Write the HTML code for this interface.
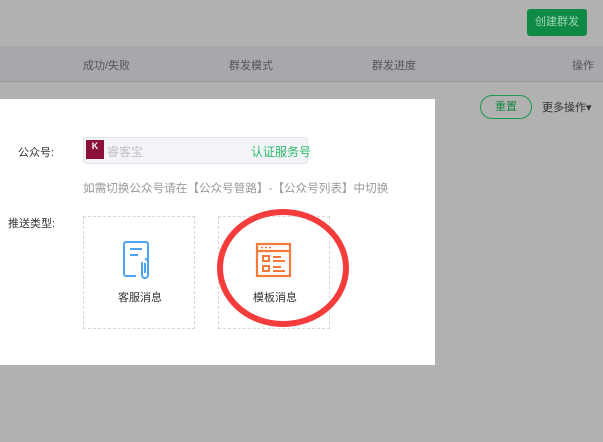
<!DOCTYPE html>
<html><head><meta charset="utf-8"><style>
body{margin:0;width:603px;height:442px;background:#b1b1b1;position:relative;overflow:hidden;font-family:"Liberation Sans","Noto Sans CJK SC",sans-serif;font-size:12px}
.a{position:absolute}
</style></head><body>
<div class="a" style="left:527px;top:9px;width:60px;height:27px;background:#0e8a44;border-radius:3px;color:#9fd5b2;text-align:center;line-height:27px;font-size:11px">创建群发</div>
<div class="a" style="left:0;top:46px;width:603px;height:35px;background:#a7a8ab;border-bottom:1px solid #9c9da0"></div>
<div class="a" style="left:83px;top:57px;color:#555;font-size:11px">成功/失败</div>
<div class="a" style="left:229px;top:57px;color:#555;font-size:11px">群发模式</div>
<div class="a" style="left:372px;top:57px;color:#555;font-size:11px">群发进度</div>
<div class="a" style="left:572px;top:57px;color:#555;font-size:11px">操作</div>
<div class="a" style="left:480px;top:95px;width:50px;height:22px;border:1px solid #1a9a4e;border-radius:12px;color:#1a8a45;text-align:center;line-height:22px;font-size:11px">重置</div>
<div class="a" style="left:542px;top:99px;color:#333;font-size:11px">更多操作▾</div>
<div class="a" style="left:0;top:99px;width:435px;height:266px;background:#fff"></div>
<div class="a" style="left:18px;top:144px;color:#333;font-size:11px">公众号:</div>
<div class="a" style="left:83px;top:137px;width:223px;height:25px;background:#f3f4f8;border:1px solid #e2e4ea;border-radius:3px"></div>
<div class="a" style="left:86px;top:140px;width:18px;height:19px;background:#8a1038;color:#fff;font-size:9px;text-align:center;line-height:12px;font-weight:bold">K</div>
<div class="a" style="left:107px;top:143px;color:#c0c0c8">睿客宝</div>
<div class="a" style="left:251px;top:143px;color:#2bbb68">认证服务号</div>
<div class="a" style="left:83px;top:180px;color:#999;font-size:11.6px">如需切换公众号请在【公众号管路】-【公众号列表】中切换</div>
<div class="a" style="left:8px;top:215px;color:#333;font-size:11px">推送类型:</div>
<div class="a" style="left:83px;top:216px;width:110px;height:111px;border:1px dashed #d8d8d8"></div>
<div class="a" style="left:218px;top:216px;width:110px;height:111px;border:1px dashed #d8d8d8"></div>
<svg class="a" style="left:120px;top:240px" width="36" height="42" viewBox="0 0 36 42"><path d="M16 36H6a2 2 0 0 1-2-2V4a2 2 0 0 1 2-2h20a2 2 0 0 1 2 2v18" fill="none" stroke="#4ea3f5" stroke-width="2"/><path d="M10 9h12M10 15h8" stroke="#4ea3f5" stroke-width="2"/><path d="M22 22v13a3 3 0 0 0 6 0V22a3 3 0 0 0-3-3" fill="none" stroke="#4ea3f5" stroke-width="2"/><path d="M25 23v10" stroke="#4ea3f5" stroke-width="2"/></svg>
<div class="a" style="left:118px;top:289px;color:#333;font-size:11px">客服消息</div>
<svg class="a" style="left:255px;top:242px" width="38" height="36" viewBox="0 0 38 36"><rect x="2" y="2" width="33" height="32" fill="none" stroke="#f4793b" stroke-width="2.2"/><path d="M2 9h33" stroke="#f4793b" stroke-width="2.2"/><path d="M6 5.5h2M10 5.5h2M14 5.5h2" stroke="#f4793b" stroke-width="1.6"/><rect x="8" y="14" width="6" height="5" fill="none" stroke="#f4793b" stroke-width="2"/><rect x="8" y="24" width="6" height="5" fill="none" stroke="#f4793b" stroke-width="2"/><path d="M18 15h8M18 19h12M18 25h8M18 29h12" stroke="#f4793b" stroke-width="2"/></svg>
<div class="a" style="left:253px;top:289px;color:#333;font-size:11px">模板消息</div>
<svg class="a" style="left:0;top:0" width="603" height="442"><ellipse cx="283" cy="268" rx="63" ry="56" fill="none" stroke="#f53c3c" stroke-width="6"/></svg>
</body></html>
